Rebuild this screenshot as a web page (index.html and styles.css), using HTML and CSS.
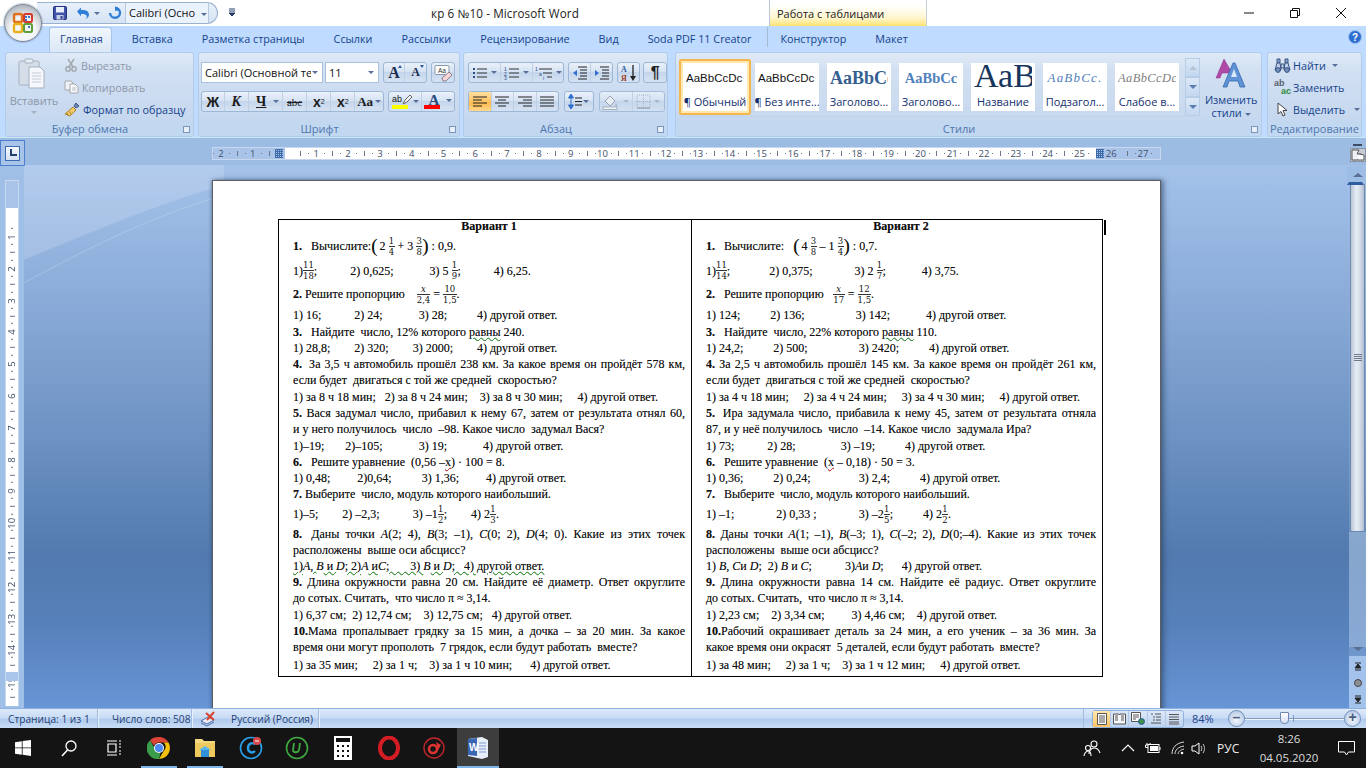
FILE: index.html
```html
<!DOCTYPE html>
<html lang="ru">
<head>
<meta charset="utf-8">
<title>кр 6 №10 - Microsoft Word</title>
<link rel="stylesheet" href="styles.css">
</head>
<body>
<div class="app">

<header class="titlebar">
  <div class="officebtn">
    <svg width="24" height="24" viewBox="0 0 24 24"><rect x="3" y="3" width="8" height="8" rx="1.5" fill="none" stroke="#e2711d" stroke-width="2.4"/><rect x="13" y="3" width="8" height="8" rx="1.5" fill="none" stroke="#d33a2c" stroke-width="2"/><rect x="3" y="13" width="8" height="8" rx="1.5" fill="none" stroke="#e8b21e" stroke-width="2.4"/><rect x="13" y="13" width="8" height="8" rx="1.5" fill="none" stroke="#5c9e3a" stroke-width="2"/><rect x="14" y="5" width="2" height="2" fill="#3a78c9"/><rect x="17" y="5" width="2" height="2" fill="#3a78c9"/><rect x="14" y="8" width="2" height="2" fill="#3a78c9"/><rect x="17" y="15" width="2" height="2" fill="#3a78c9"/></svg>
  </div>
  <div class="qat">
    <svg class="q-save" width="14" height="14" viewBox="0 0 14 14"><rect x="0.5" y="0.5" width="13" height="13" rx="1" fill="#3f54a8" stroke="#24327c"/><rect x="3" y="1" width="8" height="5.5" fill="#e8eefa"/><rect x="3.5" y="9" width="7" height="4.5" fill="#c6cfe8"/><rect x="7.5" y="10" width="2" height="3" fill="#36478f"/></svg>
    <svg class="q-undo" width="14" height="14" viewBox="0 0 14 14"><path d="M1 5.5 5 1.5V4c5-.6 8 1.6 8 4.5 0 2-1.400 3.800-3.500 4.500 1.300-1.200 1.600-2.500 1.100-3.500-.8-1.300-3-1.800-5.600-1.500v2.300z" fill="#2f7fd8"/></svg>
    <i class="caret q-caret"></i>
    <svg class="q-redo" width="14" height="14" viewBox="0 0 14 14"><path d="M7 1.800a5 5 0 1 1-5 5.200" fill="none" stroke="#2f7fd8" stroke-width="2.400"/><path d="M5 0v5.500h-3.500z" fill="#2f7fd8" transform="translate(6.500 -0.300) rotate(90 3 3)"/></svg>
    <div class="q-font">Calibri (Осно<i class="caret"></i></div>
  </div>
  <svg class="q-more" width="8" height="9" viewBox="0 0 8 9"><path d="M1 1h6M1 3h6M1 5h6L4 8z" fill="#25406e" stroke="#25406e"/></svg>
  <div class="doctitle">кр 6 №10 - Microsoft Word</div>
  <div class="ctxhead">Работа с таблицами</div>
  <div class="winbtns">
    <svg width="12" height="12" viewBox="0 0 12 12"><path d="M1 6h10" stroke="#111"/></svg>
    <svg width="12" height="12" viewBox="0 0 12 12"><path d="M1.500 3.500h7v7h-7zM3.500 3.500v-2h7v7h-2" fill="none" stroke="#111"/></svg>
    <svg width="12" height="12" viewBox="0 0 12 12"><path d="M1 1l10 10M11 1 1 11" stroke="#111"/></svg>
  </div>
</header>

<nav class="tabs">
  <span class="tab active">Главная</span><span class="tab">Вставка</span><span class="tab">Разметка страницы</span><span class="tab">Ссылки</span><span class="tab">Рассылки</span><span class="tab">Рецензирование</span><span class="tab">Вид</span><span class="tab">Soda PDF 11 Creator</span><span class="tab tab-ctx">Конструктор</span><span class="tab">Макет</span>
  <svg class="help" width="14" height="14" viewBox="0 0 14 14"><circle cx="7" cy="7" r="6.500" fill="#2f6fd0" stroke="#9cc0ee"/><text x="7" y="11" font-size="10" font-weight="700" text-anchor="middle" fill="#fff" font-family="Liberation Sans">?</text></svg>
</nav>

<section class="ribbon">
  <div class="group g-clip">
    <div class="g-body clip-body">
      <div class="paste">
        <svg width="28" height="32" viewBox="0 0 28 32"><rect x="1" y="3" width="20" height="24" rx="1.500" fill="#d4dde8" stroke="#a5b1c0"/><rect x="7" y="1" width="8" height="4" rx="1" fill="#e8edf3" stroke="#a5b1c0"/><path d="M11 9h11l4 4v17H11z" fill="#f5f7fa" stroke="#a5b1c0"/><path d="M14 15h9M14 18h9M14 21h9M14 24h9" stroke="#c3ccd8"/></svg>
        <span class="paste-t">Вставить</span>
        <i class="caret dis"></i>
      </div>
      <div class="clip-col">
        <div class="clip-row dis-t"><svg width="14" height="14" viewBox="0 0 14 14"><path d="M4 1l5 8M10 1 5 9" stroke="#a4a9ae" stroke-width="1.500"/><circle cx="4" cy="11" r="2.200" fill="none" stroke="#a4a9ae" stroke-width="1.400"/><circle cx="10" cy="11" r="2.200" fill="none" stroke="#a4a9ae" stroke-width="1.400"/></svg>Вырезать</div>
        <div class="clip-row dis-t"><svg width="15" height="14" viewBox="0 0 15 14"><path d="M1 1h6l2 2v7H1z" fill="#eef1f5" stroke="#a4a9ae"/><path d="M6 4h5l3 3v6H6z" fill="#f7f8fa" stroke="#a4a9ae"/><path d="M8 8h4M8 10h4" stroke="#b8bec6"/></svg>Копировать</div>
        <div class="clip-row"><svg width="16" height="15" viewBox="0 0 16 15"><path d="M1 12 9 5l3 3-6 6z" fill="#f0c869" stroke="#a8842f"/><path d="M3 11l1 2M5.500 9.500l1.500 2.500" stroke="#a8842f"/><path d="M10 4l2-3 3 3-3 2z" fill="#6b87b8" stroke="#3f5a8a"/></svg>Формат по образцу</div>
      </div>
    </div>
    <div class="g-label">Буфер обмена<i class="launcher"></i></div>
  </div>

  <div class="group g-font">
    <div class="g-body rows">
      <div class="row">
        <div class="combo c-name"><span class="clipt">Calibri (Основной те</span><i class="caret"></i></div>
        <div class="combo c-size"><span>11</span><i class="caret"></i></div>
        <div class="bar b-grow"><b class="btn f-grow">A<i class="up"></i></b><b class="btn f-shrink">A<i class="dn"></i></b></div>
        <div class="bar b-clear"><svg width="20" height="18" viewBox="0 0 20 18"><rect x="2" y="1.500" width="14" height="9" rx="1" fill="#fff" stroke="#8797ad"/><text x="9" y="8.500" font-size="6.500" text-anchor="middle" fill="#333" font-family="Liberation Sans">Aa</text><path d="M9 14l7-6 3 3-6 6h-3z" fill="#f6d4d8" stroke="#8a7f88"/></svg></div>
      </div>
      <div class="row">
        <div class="bar b-fmt">
          <b class="btn fw">Ж</b><b class="btn fi">К</b><b class="btn fu">Ч<i class="caret"></i></b><b class="btn fs">abc</b><b class="btn fx">x<sub>2</sub></b><b class="btn fx">x<sup>2</sup></b><b class="btn fa">Aa<i class="caret"></i></b>
        </div>
        <div class="bar b-color">
          <b class="btn hl"><span class="hl-t">ab</span><svg width="11" height="11" viewBox="0 0 11 11"><path d="M1 10l2-4 5-5 2 2-5 5z" fill="#eef0f3" stroke="#666"/></svg><i class="swatch yellow"></i><i class="caret"></i></b>
          <b class="btn fc">A<i class="swatch red"></i><i class="caret"></i></b>
        </div>
      </div>
    </div>
    <div class="g-label">Шрифт<i class="launcher"></i></div>
  </div>

  <div class="group g-para">
    <div class="g-body rows">
      <div class="row">
        <div class="bar b-lists">
          <b class="btn lst"><svg width="16" height="14" viewBox="0 0 16 14"><path d="M1 2h2v2H1zM1 6h2v2H1zM1 10h2v2H1z" fill="#2a4f8a"/><path d="M5 3h10M5 7h10M5 11h10" stroke="#333"/></svg><i class="caret"></i></b>
          <b class="btn lst"><svg width="16" height="14" viewBox="0 0 16 14"><text x="0" y="5" font-size="5" fill="#2a4f8a" font-family="Liberation Sans">1</text><text x="0" y="9.500" font-size="5" fill="#2a4f8a" font-family="Liberation Sans">2</text><text x="0" y="14" font-size="5" fill="#2a4f8a" font-family="Liberation Sans">3</text><path d="M5 3h10M5 7h10M5 11h10" stroke="#333"/></svg><i class="caret"></i></b>
          <b class="btn lst"><svg width="18" height="14" viewBox="0 0 18 14"><text x="0" y="5" font-size="5" fill="#2a4f8a" font-family="Liberation Sans">1</text><text x="4" y="9.500" font-size="5" fill="#2a4f8a" font-family="Liberation Sans">a</text><text x="8" y="14" font-size="5" fill="#2a4f8a" font-family="Liberation Sans">i</text><path d="M4 3h13M8 7h9M12 11h5" stroke="#333"/></svg><i class="caret"></i></b>
        </div>
        <div class="bar b-ind">
          <b class="btn ind"><svg width="15" height="14" viewBox="0 0 15 14"><path d="M6 1h9M8 4h7M8 7h7M8 10h7M6 13h9" stroke="#222"/><path d="M1 7l4-3v6z" fill="#2f6fd0"/></svg></b>
          <b class="btn ind"><svg width="15" height="14" viewBox="0 0 15 14"><path d="M6 1h9M8 4h7M8 7h7M8 10h7M6 13h9" stroke="#222"/><path d="M5 7 1 4v6z" fill="#2f6fd0"/></svg></b>
        </div>
        <div class="bar b-sort"><svg width="16" height="18" viewBox="0 0 16 18"><text x="0" y="8" font-size="8" font-weight="700" fill="#2f5d9f" font-family="Liberation Serif">А</text><text x="0" y="17" font-size="8" font-weight="700" fill="#9c3d2b" font-family="Liberation Serif">Я</text><path d="M12 1v14" stroke="#222" stroke-width="1.300"/><path d="M9 12h6l-3 5z" fill="#222"/></svg></div>
        <div class="bar b-pil"><span class="pil">¶</span></div>
      </div>
      <div class="row">
        <div class="bar b-align">
          <b class="btn al on"><svg width="16" height="14" viewBox="0 0 16 14"><path d="M1 2h14M1 5h9M1 8h14M1 11h9" stroke="#222"/></svg></b>
          <b class="btn al"><svg width="16" height="14" viewBox="0 0 16 14"><path d="M1 2h14M4 5h8M1 8h14M4 11h8" stroke="#222"/></svg></b>
          <b class="btn al"><svg width="16" height="14" viewBox="0 0 16 14"><path d="M1 2h14M6 5h9M1 8h14M6 11h9" stroke="#222"/></svg></b>
          <b class="btn al"><svg width="16" height="14" viewBox="0 0 16 14"><path d="M1 2h14M1 5h14M1 8h14M1 11h14" stroke="#222"/></svg></b>
        </div>
        <div class="bar b-space"><svg width="14" height="17" viewBox="0 0 14 17"><path d="M3 1 .5 5h5zM3 16 .5 12h5zM3 4v9" fill="#2f6fd0" stroke="#2f6fd0"/><path d="M7 5h7M7 8.500h7M7 12h7" stroke="#222"/></svg><i class="caret"></i></div>
        <div class="bar b-shade">
          <b class="btn sh"><svg width="18" height="16" viewBox="0 0 18 16"><path d="M3 7 8 2l5 5-5 5z" fill="#eef1f5" stroke="#8f98a4"/><path d="M14 9c1 2 2 3 0 4-1-1-1-2 0-4z" fill="#9fb0c4"/><rect x="1" y="13" width="14" height="2.500" fill="#fff" stroke="#9aa5b3"/></svg><i class="caret dis"></i></b>
          <b class="btn sh"><svg width="15" height="15" viewBox="0 0 15 15"><path d="M1 1h13v13H1zM7.500 1v13M1 7.500h13" fill="none" stroke="#a3aebc" stroke-dasharray="1 1"/><path d="M1 14h13" stroke="#7d8a9c"/></svg><i class="caret dis"></i></b>
        </div>
      </div>
    </div>
    <div class="g-label">Абзац<i class="launcher"></i></div>
  </div>

  <div class="group g-styles">
    <div class="g-body styles-body">
      <div class="gallery">
        <div class="st sel"><span class="st-s s1">AaBbCcDc</span><span class="st-l">¶ Обычный</span></div>
        <div class="st"><span class="st-s s1">AaBbCcDc</span><span class="st-l">¶ Без инте...</span></div>
        <div class="st"><span class="st-s s3">AaBbCc</span><span class="st-l">Заголово...</span></div>
        <div class="st"><span class="st-s s4">AaBbCc</span><span class="st-l">Заголово...</span></div>
        <div class="st"><span class="st-s s5">АаВ</span><span class="st-l">Название</span></div>
        <div class="st"><span class="st-s s6">AaBbCc.</span><span class="st-l">Подзагол...</span></div>
        <div class="st"><span class="st-s s7">AaBbCcDc</span><span class="st-l">Слабое в...</span></div>
        <div class="gal-scroll"><i class="gs dis-up"></i><i class="gs g-dn"></i><i class="gs g-more"></i></div>
      </div>
      <div class="chg">
        <svg width="32" height="30" viewBox="0 0 32 30"><path d="M9 1 1 20h4l2-5h7l2 5h4z" fill="#b04aa8" stroke="#8f2f8a" stroke-width=".5"/><path d="M18 5 8 29h4l2-6h9l2 6h5L20 5z" fill="#5f93d6" stroke="#3668b0" stroke-width=".8"/><path d="M16 19h6l-3-8z" fill="#dce9f8"/></svg>
        <span>Изменить<br>стили<i class="caret"></i></span>
      </div>
    </div>
    <div class="g-label">Стили<i class="launcher"></i></div>
  </div>

  <div class="group g-edit">
    <div class="g-body edit-col">
      <div class="ed"><svg width="17" height="15" viewBox="0 0 17 15"><path d="M3 1h3v4H3zM11 1h3v4h-3z" fill="#8aa6cf" stroke="#39527f"/><path d="M1 12l2-7h3l1 7zM10 12l1-7h3l2 7zM7 6h3v4H7z" fill="#c3d3ea" stroke="#39527f"/><circle cx="4" cy="12" r="2.400" fill="#6f8fbd" stroke="#39527f"/><circle cx="13" cy="12" r="2.400" fill="#6f8fbd" stroke="#39527f"/></svg>Найти<i class="caret"></i></div>
      <div class="ed"><span class="ab">ab<em>ac</em></span>Заменить</div>
      <div class="ed ed-sel"><svg width="11" height="15" viewBox="0 0 11 15"><path d="M1 1v11l3-2.500 2 4.500 2-1-2-4.500h4z" fill="#fff" stroke="#444"/></svg>Выделить<i class="caret"></i></div>
    </div>
    <div class="g-label lab-full">Редактирование</div>
  </div>
</section>

<div class="rulerrow">
  <div class="tabsel"><span class="tabsel-in"><svg width="8" height="8" viewBox="0 0 8 8"><path d="M1 0h2v5h5v2H1z" fill="#24406e"/></svg></span></div>
  <div class="hruler">
    <span class="rn first">2</span><span class="rn">1</span><span class="rn zero"><i class="gridmark"></i></span><span class="rn">1</span><span class="rn">2</span><span class="rn">3</span><span class="rn">4</span><span class="rn">5</span><span class="rn">6</span><span class="rn">7</span><span class="rn">8</span><span class="rn">9</span><span class="rn">10</span><span class="rn">11</span><span class="rn">12</span><span class="rn">13</span><span class="rn">14</span><span class="rn">15</span><span class="rn">16</span><span class="rn">17</span><span class="rn">18</span><span class="rn">19</span><span class="rn">20</span><span class="rn">21</span><span class="rn">22</span><span class="rn">23</span><span class="rn">24</span><span class="rn">25</span><span class="rn rn-mark"><i class="gridmark"></i>26</span><span class="rn">27</span>
  </div>
  <div class="rulertoggle"><i class="split"></i><span class="togglebtn"><svg width="14" height="12" viewBox="0 0 14 12"><path d="M1 1h7l-2 4h4v4l-4 2H1z" fill="#eef1f5" stroke="#555"/><path d="M8 5l5 1v5H7" fill="#fff" stroke="#555"/></svg></span></div>
</div>

<main class="work">
  <div class="vcol">
    <div class="vruler">
      <div class="v-top"></div>
      <span class="vn">1</span><span class="vn">2</span><span class="vn">3</span><span class="vn">4</span><span class="vn">5</span><span class="vn">6</span><span class="vn">7</span><span class="vn">8</span><span class="vn">9</span><span class="vn">10</span><span class="vn">11</span><span class="vn">12</span><span class="vn">13</span><span class="vn">14</span><span class="vn">15</span>
      <i class="v-mark"></i>
    </div>
  </div>
  <div class="canvas">
    <svg class="swoosh" width="200" height="130" viewBox="0 0 200 130"><path d="M0 0H200V20C130 40 60 70 0 95z" fill="#fff" opacity=".16"/><path d="M0 118C60 85 130 50 200 30" fill="none" stroke="#fff" opacity=".2"/></svg>
    <div class="page">
      <div class="doc">
        <div class="cell cell-l">
          <div class="ln head">Вариант 1</div>
          <div class="ln m h23"><b class="n1">1.</b><span>   Вычислите:</span><span class="par">(</span><span class="pad">2</span><span class="fr gap"><u>1</u><u>4</u></span><span> + 3</span><span class="fr gap"><u>3</u><u>8</u></span><span class="par">)</span><span> : 0,9.</span></div>
          <div class="ln m h25"><span>1)</span><span class="fr"><u>11</u><u>18</u></span><span>;           2) 0,625;            3) 5</span><span class="fr sp"><u>1</u><u>9</u></span><span>;           4) 6,25.</span></div>
          <div class="ln m h23"><b class="n1">2.</b><span> Решите пропорцию    </span><span class="fr it wide"><u>x</u><u>2,4</u></span><span> = </span><span class="fr wide"><u>10</u><u>1,5</u></span><span>.</span></div>
          <div class="ln h17">1) 16;           2) 24;            3) 28;          4) другой ответ.</div>
          <div class="ln"><b>3.</b>   Найдите  число, 12% которого <span class="wv-g">равны</span> 240.</div>
          <div class="ln">1) 28,8;        2) 320;        3) 2000;        4) другой ответ.</div>
          <div class="ln j"><b class="nb">4.</b> За 3,5 ч автомобиль прошёл 238 км. За какое время он пройдёт 578 км,</div>
          <div class="ln">если будет  двигаться с той же средней  скоростью?</div>
          <div class="ln">1) за 8 ч 18 мин;   2) за 8 ч 24 мин;    3) за 8 ч 30 мин;     4) другой ответ.</div>
          <div class="ln j"><b>5.</b> Вася задумал число, прибавил к нему 67, затем от результата отнял 60,</div>
          <div class="ln">и у него получилось  число  –98. Какое число  задумал Вася?</div>
          <div class="ln">1)–19;       2)–105;            3) 19;            4) другой ответ.</div>
          <div class="ln"><b>6.</b>   Решите уравнение  (0,56 –<span class="wv-r">x</span>) · 100 = 8.</div>
          <div class="ln">1) 0,48;         2)0,64;          3) 1,36;         4) другой ответ.</div>
          <div class="ln"><b>7.</b> Выберите  число, модуль которого наибольший.</div>
          <div class="ln m h23"><span>1)–5;        2) –2,3;           3) –1</span><span class="fr"><u>1</u><u>2</u></span><span>;        4) 2</span><span class="fr"><u>1</u><u>3</u></span><span>.</span></div>
          <div class="ln j"><b class="nb">8.</b>  Даны точки <span class="wv-g"><i>A</i></span>(2; 4), <i>B</i>(3; –1), <i>C</i>(0; 2), <i>D</i>(4; 0). Какие из этих точек</div>
          <div class="ln h15">расположены  выше оси абсцисс?</div>
          <div class="ln"><span class="wv-g">1)<i>A</i>, <i>B</i> и <i>D</i>; 2)<i>A</i> и<span class="wv-r"><i>C</i></span>;       3) <i>B</i> и <i>D</i>;   4) другой ответ.</span></div>
          <div class="ln j"><b>9.</b> Длина окружности равна 20 см. Найдите её диаметр. Ответ округлите</div>
          <div class="ln">до сотых. Считать,  что число π ≈ 3,14.</div>
          <div class="ln">1) 6,37 см;  2) 12,74 см;    3) 12,75 см;   4) другой ответ.</div>
          <div class="ln j"><b>10.</b>Мама пропалывает грядку за 15 мин, а дочка – за 20 мин. За какое</div>
          <div class="ln">время они могут прополоть  7 грядок, если будут работать  вместе?</div>
          <div class="ln h18">1) за 35 мин;     2) за 1 ч;    3) за 1 ч 10 мин;      4) другой ответ.</div>
        </div>
        <div class="cell cell-r">
          <div class="ln head">Вариант 2</div>
          <div class="ln m h23"><b class="n1">1.</b><span>   Вычислите:   </span><span class="par">(</span><span class="pad">4</span><span class="fr gap"><u>3</u><u>8</u></span><span> – 1</span><span class="fr gap"><u>3</u><u>4</u></span><span class="par">)</span><span> : 0,7.</span></div>
          <div class="ln m h25"><span>1)</span><span class="fr"><u>11</u><u>14</u></span><span>;             2) 0,375;              3) 2</span><span class="fr sp"><u>1</u><u>7</u></span><span>;            4) 3,75.</span></div>
          <div class="ln m h23"><b class="n1">2.</b><span>   Решите пропорцию   </span><span class="fr it wide"><u>x</u><u>17</u></span><span> = </span><span class="fr wide"><u>12</u><u>1,5</u></span><span>.</span></div>
          <div class="ln h17">1) 124;          2) 136;                 3) 142;            4) другой ответ.</div>
          <div class="ln"><b>3.</b>   Найдите  число, 22% которого <span class="wv-g">равны</span> 110.</div>
          <div class="ln">1) 24,2;          2) 500;                 3) 2420;          4) другой ответ.</div>
          <div class="ln j"><b>4.</b> За 2,5 ч автомобиль прошёл 145 км. За какое время он пройдёт 261 км,</div>
          <div class="ln">если будет  двигаться с той же средней  скоростью?</div>
          <div class="ln">1) за 4 ч 18 мин;     2) за 4 ч 24 мин;     3) за 4 ч 30 мин;     4) другой ответ.</div>
          <div class="ln j"><b class="nb">5.</b> Ира задумала число, прибавила к нему 45, затем от результата отняла</div>
          <div class="ln">87, и у неё получилось  число  –14. Какое число  задумала Ира?</div>
          <div class="ln">1) 73;           2) 28;               3) –19;          4) другой ответ.</div>
          <div class="ln"><b>6.</b>   Решите уравнение  (<span class="wv-r">x</span> – 0,18) · 50 = 3.</div>
          <div class="ln">1) 0,36;          2) 0,24;                3) 2,4;          4) другой ответ.</div>
          <div class="ln"><b>7.</b>   Выберите  число, модуль которого наибольший.</div>
          <div class="ln m h23"><span>1) –1;              2) 0,33 ;              3) –2</span><span class="fr"><u>1</u><u>5</u></span><span>;          4) 2</span><span class="fr"><u>1</u><u>2</u></span><span>.</span></div>
          <div class="ln j"><b>8.</b>  Даны точки <span class="wv-g"><i>A</i></span>(1; –1), <i>B</i>(–3; 1), <i>C</i>(–2; 2), <i>D</i>(0;–4). Какие из этих точек</div>
          <div class="ln h15">расположены  выше оси абсцисс?</div>
          <div class="ln">1) <i>B</i>, <i>C</i>и <i>D</i>;  2) <i>B</i> и <span class="wv-g"><i>C</i></span>;           3)<i>A</i>и <i>D</i>;      4) другой ответ.</div>
          <div class="ln j"><b>9.</b>  Длина окружности равна 14 см. Найдите её радиус. Ответ округлите</div>
          <div class="ln">до сотых. Считать,  что число π ≈ 3,14.</div>
          <div class="ln">1) 2,23 см;    2) 3,34 см;         3) 4,46 см;    4) другой ответ.</div>
          <div class="ln j"><b>10.</b>Рабочий окрашивает деталь за 24 мин, а его ученик – за 36 мин. За</div>
          <div class="ln">какое время они окрасят  5 деталей, если будут работать  вместе?</div>
          <div class="ln h18">1) за 48 мин;     2) за 1 ч;    3) за 1 ч 12 мин;     4) другой ответ.</div>
        </div>
        <i class="cursor"></i>
      </div>
    </div>
  </div>
  <aside class="vscroll">
    <i class="sb-arrow up"></i>
    <i class="sb-thumb"><i class="sb-grip"></i></i>
    <i class="sb-track"></i>
    <i class="sb-arrow down"></i>
    <div class="sb-nav">
      <svg width="8" height="9" viewBox="0 0 8 9"><path d="M1 8h6M1 6h6L4 2z M1 1h6" stroke="#222" fill="#222"/></svg>
      <svg width="8" height="8" viewBox="0 0 8 8"><circle cx="4" cy="4" r="3.500" fill="#8b8f96" stroke="#444"/></svg>
      <svg width="8" height="9" viewBox="0 0 8 9"><path d="M1 1h6M1 3h6L4 7zM1 8h6" stroke="#222" fill="#222"/></svg>
    </div>
  </aside>
</main>

<footer class="status">
  <span class="s-cell s1c">Страница: 1 из 1</span>
  <span class="s-cell s2c">Число слов: 508</span>
  <span class="s-cell s3c"><svg width="16" height="16" viewBox="0 0 16 16"><path d="M1 10l7-4 6 3-7 4z" fill="#e9eef7" stroke="#4a6aa5"/><path d="M1 12l6 3 7-4" fill="none" stroke="#4a6aa5"/><path d="M6 2l8 7M14 1 7 9" stroke="#d8432f" stroke-width="2"/></svg><span class="lang">Русский (Россия)</span></span>
  <div class="s-right">
    <div class="views">
      <b class="vw on"><svg width="12" height="12" viewBox="0 0 12 12"><path d="M1.500.5h9v11h-9zM3 3h6M3 5h6M3 7h6M3 9h6" fill="#fff" stroke="#555"/></svg></b>
      <b class="vw"><svg width="13" height="12" viewBox="0 0 13 12"><path d="M.5 1h5.500l.5 1 .5-1h5.500v10H.5zM2 3h3M2 5h3M2 7h3M8 3h3M8 5h3M8 7h3" fill="#f4f6f9" stroke="#555"/></svg></b>
      <b class="vw"><svg width="14" height="13" viewBox="0 0 14 13"><path d="M.5.5h9v9h-9zM2 3h6M2 5h6M2 7h3" fill="#fff" stroke="#555"/><circle cx="10.500" cy="9.500" r="3" fill="#3f8e4c" stroke="#2a5fa5"/></svg></b>
      <b class="vw"><svg width="12" height="12" viewBox="0 0 12 12"><path d="M1 1h2M5 1h6M3 4h2M6 4h5M3 7h2M6 7h5M1 10h10" stroke="#555"/></svg></b>
      <b class="vw"><svg width="12" height="12" viewBox="0 0 12 12"><path d="M1 1.500h10M1 4h10M1 6.500h10M1 9h10M1 11h10" stroke="#555"/></svg></b>
    </div>
    <span class="zoomval">84%</span>
    <b class="zbtn">–</b>
    <span class="ztrack"><i class="zthumb"></i><i class="zmid"></i></span>
    <b class="zbtn">+</b>
  </div>
</footer>

<div class="taskbar">
  <span class="tb win"><svg width="16" height="16" viewBox="0 0 16 16"><path d="M0 2.200 6.800 1.200v6.300H0zM7.600 1.100 16 0v7.500H7.600zM0 8.300h6.800v6.400L0 13.800zM7.600 8.300H16V16l-8.400-1.200z" fill="#fff"/></svg></span>
  <span class="tb nar"><svg width="16" height="17" viewBox="0 0 16 17"><circle cx="10" cy="6" r="5" fill="none" stroke="#fff" stroke-width="1.300"/><path d="M6.500 10 1 16" stroke="#fff" stroke-width="1.600"/></svg></span>
  <span class="tb nar"><svg width="16" height="16" viewBox="0 0 16 16"><path d="M1 1h10M1 15h10M2 4h8v8H2zM13 1h2M13 7h2M13 14h2M13 4h2M13 11h2" fill="none" stroke="#fff" stroke-width="1.200"/></svg></span>
  <span class="tb pin"><svg width="24" height="24" viewBox="0 0 24 24"><path d="M12 1a11 11 0 0 1 9.500 5.500H12a5.500 5.500 0 0 0-5 3L3 4.200A11 11 0 0 1 12 1z" fill="#db4437"/><path d="M21.500 6.500A11 11 0 0 1 12 23l4.700-8a5.500 5.500 0 0 0 0-8.500z" fill="#f4c20d"/><path d="M12 23A11 11 0 0 1 3 4.200L7.500 12a5.500 5.500 0 0 0 6 5z" fill="#3b9c4b"/><circle cx="12" cy="12" r="5" fill="#fff"/><circle cx="12" cy="12" r="4" fill="#4c8bf5"/></svg></span>
  <span class="tb pin"><svg width="22" height="20" viewBox="0 0 22 20"><path d="M1 1h7l2 2h11v16H1z" fill="#f5d97e"/><path d="M1 5h20v14H1z" fill="#eeca5e"/><path d="M7 12h8v7H7z" fill="#2f8fd8"/><path d="M5 12h12l-6-4z" fill="#58b6ee"/></svg></span>
  <span class="tb"><svg width="24" height="24" viewBox="0 0 24 24"><circle cx="12" cy="12" r="10.500" fill="none" stroke="#2aa0e8" stroke-width="1.600"/><path d="M16 8.500c-3-3-7-.5-7 3.500s4 6 7 3" fill="none" stroke="#2aa0e8" stroke-width="2.400"/><circle cx="18" cy="5" r="4" fill="#d94848"/><path d="M16 5h4" stroke="#fff"/></svg></span>
  <span class="tb"><svg width="24" height="24" viewBox="0 0 24 24"><circle cx="12" cy="12" r="10.500" fill="none" stroke="#3fa83f" stroke-width="1.600"/><path d="M9 7l-1 7c0 3 5 3 6 0l1-7" fill="none" stroke="#3fa83f" stroke-width="1.800"/></svg></span>
  <span class="tb"><svg width="18" height="24" viewBox="0 0 18 24"><rect width="18" height="24" fill="#fff"/><rect x="2" y="2" width="14" height="4" fill="#111"/><path d="M3 9h2v2H3zM8 9h2v2H8zM13 9h2v2h-2zM3 14h2v2H3zM8 14h2v2H8zM13 14h2v2h-2zM3 19h2v2H3zM8 19h2v2H8zM13 19h2v2h-2z" fill="#111"/></svg></span>
  <span class="tb nar2"><svg width="22" height="24" viewBox="0 0 22 24"><ellipse cx="11" cy="12" rx="9" ry="10.500" fill="none" stroke="#d41c25" stroke-width="4"/></svg></span>
  <span class="tb"><svg width="22" height="22" viewBox="0 0 22 22"><circle cx="11" cy="11" r="10" fill="none" stroke="#c3262a" stroke-width="1.400"/><circle cx="10" cy="12" r="4" fill="none" stroke="#d33" stroke-width="2.600"/><path d="M13 5l5 3-3 5z" fill="#d33"/></svg></span>
  <span class="tb active"><svg width="22" height="24" viewBox="0 0 22 24"><path d="M1 3 15 1l6 3v17l-6 2-14-3z" fill="#e8eef8"/><path d="M1 3 10 2v18l-9-1z" fill="#3b66b3"/><path d="M12 7h7M12 10h7M12 13h7M12 16h7" stroke="#7d9bd0"/><text x="2" y="15" font-size="10" font-weight="700" fill="#fff" font-family="Liberation Sans">W</text></svg></span>
  <div class="tray">
    <svg class="t-people" width="18" height="18" viewBox="0 0 18 18"><circle cx="11" cy="5" r="3" fill="none" stroke="#fff" stroke-width="1.100"/><path d="M6 15c0-3 2-6 5-6s5 2 6 5" fill="none" stroke="#fff" stroke-width="1.100"/><circle cx="5" cy="9" r="2.500" fill="#111" stroke="#fff" stroke-width="1.100"/><path d="M1 17c0-2 2-5 4-5s3 2 3 5" fill="none" stroke="#fff" stroke-width="1.100"/></svg>
    <svg class="t-chev" width="14" height="8" viewBox="0 0 14 8"><path d="M1 7l6-6 6 6" fill="none" stroke="#fff" stroke-width="1.100"/></svg>
    <svg class="t-bat" width="17" height="12" viewBox="0 0 17 12"><path d="M3 1v2M6 1v2M1.500 3h6v2.500h-6zM4.500 5.500V9" fill="none" stroke="#fff"/><rect x="4" y="2.500" width="11" height="8" fill="#111" stroke="#fff"/><rect x="6" y="4" width="8" height="5" fill="#fff"/><path d="M16 5v3" stroke="#fff"/></svg>
    <svg class="t-wifi" width="14" height="14" viewBox="0 0 14 14"><path d="M1 13C1 7 5 2 13 1M4 13c0-4 3-7 9-8M7 13c0-2 2-4 6-5" fill="none" stroke="#ddd" stroke-width="1"/><circle cx="11" cy="12" r="1.300" fill="#fff"/></svg>
    <svg class="t-vol" width="16" height="13" viewBox="0 0 16 13"><path d="M1 4h3l4-3v11L4 9H1z" fill="none" stroke="#fff"/><path d="M10 4c1 1.500 1 3.500 0 5M12 2c2 3 2 6 0 9" fill="none" stroke="#ccc"/></svg>
    <span class="t-lang">РУС</span>
    <span class="t-clock">8:26<br>04.05.2020</span>
    <svg class="t-note" width="17" height="15" viewBox="0 0 17 15"><path d="M.500.500h16v10.500H10.500L8.500 14 6.500 11H.500z" fill="none" stroke="#fff"/></svg>
  </div>
</div>

</div>
</body>
</html>
```

FILE: styles.css
```css
* { box-sizing: border-box; }
html, body { margin: 0; padding: 0; }
body { width: 1366px; height: 768px; overflow: hidden; font-family: "Open Sans", "Noto Sans", sans-serif; font-size: 11px; color: #15428b; }
.app { display: flex; flex-direction: column; width: 1366px; height: 768px; position: relative; overflow: hidden; }
i, u, b { display: inline-block; }
.caret { width: 0; height: 0; border: 3px solid transparent; border-top: 3px solid #56709c; border-bottom: 0; display: inline-block; vertical-align: middle; margin-left: 6px; }
.caret.dis { border-top-color: #a5b1c2; }

/* title bar */
.titlebar { height: 26px; background: #fff; display: flex; align-items: center; position: relative; flex: none; }
.officebtn { position: absolute; left: 4px; top: 4px; width: 38px; height: 38px; border-radius: 50%; background: radial-gradient(circle at 50% 70%, #f4f5f6 0 40%, #c2c7ce 70%, #8c939d 100%); border: 1px solid #7c8a9c; box-shadow: 0 0 2px #5b6c82; display: flex; align-items: center; justify-content: center; z-index: 3; }
.qat { margin-left: 37px; height: 22px; width: 181px; display: flex; align-items: center; border: 1px solid #9bb2cf; border-left: 0; border-radius: 0 11px 11px 0; background: linear-gradient(#e8f0fa, #d5e3f4); padding-left: 16px; }
.q-undo { margin-left: 9px; }
.q-caret { margin-left: 4px; margin-right: 0; }
.q-redo { margin-left: 8px; }
.q-font { margin-left: 3px; height: 20px; width: 84px; background: #eaf2fc; border-left: 1px solid #b7c9e0; border-right: 1px solid #b7c9e0; padding-left: 3px; color: #111; font-size: 11px; line-height: 19px; white-space: nowrap; }
.q-more { margin-left: 10px; margin-top: -2px; }
.doctitle { position: absolute; left: 431px; top: 5px; color: #222; font-size: 11.700px; letter-spacing: .1px; }
.ctxhead { position: absolute; left: 769px; top: 0; width: 158px; height: 26px; padding: 6px 0 0 7px; color: #222; font-size: 11px; background: linear-gradient(#fff 20%, #fff6cd 70%, #ffe26f 100%); border-left: 1px solid #b9c6d9; border-right: 1px solid #c9cfd6; }
.winbtns { margin-left: auto; display: flex; gap: 34px; padding-right: 19px; }

/* tabs */
.tabs { height: 24px; background: #bfdbff; display: flex; align-items: center; gap: 29px; padding-left: 60px; flex: none; position: relative; }
.tab { font-size: 10.800px; color: #15428b; white-space: nowrap; position: relative; }
.tab.active { isolation: isolate; }
.tab.active::before { content: ""; position: absolute; z-index: -1; left: -11px; right: -9px; top: -4px; bottom: -6px; background: linear-gradient(#f0f6fd, #dbe7f6); border: 1px solid #a6c4e8; border-bottom: 0; border-radius: 3px 3px 0 0; }
.tab-ctx::before { content: ""; position: absolute; left: -13px; top: -4px; height: 20px; width: 1px; background: #a5b9d2; }
.help { position: absolute; right: 4px; top: 4px; }

/* ribbon */
.ribbon { height: 88px; flex: none; background: #bfdbff; display: flex; padding: 2px 0 0 5px; border-bottom: 1px solid #c8e6f4; }
.group { height: 85px; border: 1px solid #b1cbe8; border-radius: 3px; background: linear-gradient(#dfeaf7, #d2e0f2 20%, #c6d8ef 80%); display: flex; flex-direction: column; overflow: hidden; position: relative; }
.g-body { flex: 1; min-height: 0; }
.g-label { height: 15px; background: #c2d8f1; text-align: center; color: #4e76ad; font-size: 11px; line-height: 15px; padding-right: 19px; position: relative; flex: none; white-space: nowrap; }
.lab-full { padding-right: 0; }
.launcher { position: absolute; right: 3px; bottom: 3px; width: 7px; height: 7px; border: 1px solid #7a96bd; background: #e9f0fa; }
.g-clip { width: 189px; margin-right: 4px; }
.g-font { width: 262px; margin-right: 3px; }
.g-para { width: 205px; margin-right: 7px; }
.g-styles { width: 587px; margin-right: 5px; }
.g-edit { width: 95px; }
.clip-body { display: flex; }
.paste { width: 56px; display: flex; flex-direction: column; align-items: center; padding: 5px 0 0 0; }
.paste svg { margin-left: -4px; }
.paste-t { color: #8b97a7; font-size: 11px; margin-top: 3px; }
.paste .caret { margin: 3px 0 0; }
.clip-col { padding-top: 1px; margin-left: 2px; }
.clip-row { height: 22px; display: flex; align-items: center; gap: 3px; font-size: 10.800px; white-space: nowrap; }
.clip-row svg { flex: none; }
.dis-t { color: #8d99a9; }
.rows { padding: 9px 0 0 2px; display: flex; flex-direction: column; gap: 8px; }
.row { display: flex; height: 21px; }
.combo { background: #fff; border: 1px solid #a9c0dc; height: 21px; color: #111; display: flex; align-items: center; padding-left: 3px; font-size: 11px; }
.combo .caret { margin-left: auto; margin-right: 4px; }
.clipt { width: 106px; overflow: hidden; white-space: nowrap; }
.c-name { width: 122px; }
.c-size { width: 54px; margin-left: 2px; }
.bar { height: 21px; border: 1px solid #9db7d6; border-radius: 3px; background: linear-gradient(#eaf1fa, #d6e3f3 45%, #c5d6ec 50%, #d5e2f2); display: flex; align-items: center; color: #222; }
.btn { height: 100%; display: flex; align-items: center; justify-content: center; border-right: 1px solid #bfd0e5; position: relative; font-weight: 400; }
.btn:last-child { border-right: 0; }
.b-grow { width: 44px; margin-left: 4px; }
.f-grow, .f-shrink { width: 22px; font-family: "Liberation Serif", serif; font-weight: 700; color: #1b2e50; font-size: 16px; }
.f-shrink { font-size: 12px; }
.up, .dn { width: 0; height: 0; border: 2.500px solid transparent; position: absolute; right: 2px; top: 2px; }
.up { border-bottom: 3px solid #2f5da0; border-top: 0; }
.dn { border-top: 3px solid #2f5da0; border-bottom: 0; }
.b-clear { width: 24px; margin-left: 4px; justify-content: center; }
.b-fmt { width: 183px; }
.fw, .fi, .fu, .fs, .fx, .fa { font-family: "Liberation Serif", serif; color: #1c1c1c; height: 100%; }
.fw { width: 23px; font-weight: 700; font-size: 14px; font-family: "Liberation Sans", sans-serif; }
.fi { width: 24px; font-weight: 700; font-style: italic; font-size: 14px; }
.fu { width: 34px; font-weight: 700; font-size: 14px; text-decoration: underline; padding-right: 8px; }
.fu .caret { position: absolute; right: 3px; }
.fs { width: 25px; font-size: 11px; text-decoration: line-through; }
.fx { width: 24px; font-weight: 700; font-size: 14px; font-family: "Liberation Sans", sans-serif; }
.fx sub, .fx sup { font-size: 7px; font-weight: 400; }
.fa { width: 28px; font-size: 13px; font-weight: 700; border-right: 0; justify-content: flex-start; padding-left: 2px; }
.fa .caret { margin-left: 2px; }
.b-color { width: 67px; margin-left: 4px; }
.hl { width: 34px; justify-content: flex-start; padding-left: 3px; }
.hl-t { font-size: 9px; line-height: 9px; color: #111; margin-bottom: 5px; font-family: "Liberation Sans", sans-serif; }
.hl svg { margin-bottom: 4px; }
.hl .caret { position: absolute; right: 2px; margin: 0; }
.swatch { position: absolute; height: 4px; width: 16px; left: 3px; bottom: 2px; }
.yellow { background: #ffff00; }
.red { background: #f00; }
.fc { width: 32px; font-family: "Liberation Serif", serif; font-size: 15px; color: #28487f; font-weight: 700; justify-content: flex-start; padding: 0 0 3px 6px; }
.fc .swatch { left: 2px; }
.fc .caret { position: absolute; right: 2px; margin: 0; }
.b-lists { width: 98px; margin-left: 2px; }
.lst { flex: 1; gap: 0; }
.lst .caret { margin-left: 3px; }
.b-ind { width: 45px; margin-left: 4px; }
.ind { flex: 1; }
.b-sort { width: 24px; margin-left: 4px; justify-content: center; }
.b-pil { width: 24px; margin-left: 3px; justify-content: center; }
.pil { font-family: "Liberation Sans", sans-serif; font-weight: 700; font-size: 16px; color: #222; }
.b-align { width: 91px; margin-left: 2px; }
.al { flex: 1; }
.al.on { background: linear-gradient(#ffe0a0, #ffc463 50%, #ffb74d 55%, #ffd98a); }
.b-space { width: 30px; margin-left: 5px; padding-left: 3px; }
.b-space .caret { margin-left: 1px; }
.b-shade { width: 66px; margin-left: 5px; opacity: .85; }
.sh { flex: 1; }
.sh .caret { margin-left: 3px; }
.styles-body { display: flex; padding: 5px 0 0 3px; }
.gallery { width: 522px; height: 59px; border: 1px solid #c2d4ea; border-top: 0; border-left: 0; border-radius: 3px; display: flex; gap: 8px; padding: 5px 0 0 3px; position: relative; }
.st { width: 64px; height: 48px; background: #fff; display: flex; flex-direction: column; align-items: center; overflow: hidden; }
.st.sel { width: 72px; height: 56px; margin: -4px -4px 0 -3px; border: 2px solid #f4b650; border-radius: 2px; padding: 2px 4px; background: #fff; box-shadow: inset 0 0 0 2px #ffe7ae; }
.st-s { height: 30px; line-height: 30px; width: 58px; overflow: hidden; white-space: nowrap; color: #111; font-family: "Liberation Sans", sans-serif; text-align: center; flex: none; }
.s1 { font-size: 11.500px; text-align: left; }
.s3 { font-family: "Liberation Serif", serif; font-weight: 700; font-size: 18px; color: #365f91; text-align: left; }
.s4 { font-family: "Liberation Serif", serif; font-weight: 700; font-size: 14.500px; color: #4f81bd; }
.s5 { font-family: "Liberation Serif", serif; font-size: 34px; color: #17365d; line-height: 26px; }
.s6 { font-family: "Liberation Serif", serif; font-style: italic; font-size: 13px; letter-spacing: 1.200px; color: #4f81bd; }
.s7 { font-family: "Liberation Serif", serif; font-style: italic; font-size: 12.500px; color: #808080; letter-spacing: .4px; }
.st-l { color: #15306e; font-size: 11px; line-height: 17px; white-space: nowrap; }
.gal-scroll { position: absolute; left: 506px; top: 0; width: 15px; height: 58px; display: flex; flex-direction: column; }
.gs { flex: 1; border: 1px solid #b7cce6; background: linear-gradient(#dce8f7, #c3d7ef); position: relative; }
.gs::after { content: ""; position: absolute; left: 3px; top: 7px; border: 4px solid transparent; border-top: 4px solid #5b7eb0; border-bottom: 0; }
.dis-up::after { border-top: 0; border-bottom: 4px solid #b5c3d6; }
.chg { margin-left: 3px; width: 60px; text-align: center; display: flex; flex-direction: column; align-items: center; line-height: 13px; font-size: 10.800px; }
.chg svg { margin-bottom: 5px; }
.chg .caret { margin-left: 3px; }
.edit-col { padding-top: 1px; padding-left: 6px; }
.ed { height: 22px; display: flex; align-items: center; gap: 2px; white-space: nowrap; font-size: 10.800px; }
.ed .caret { margin-left: 4px; }
.ed-sel { padding-left: 3px; gap: 5px; }
.ab { width: 17px; font-size: 9px; line-height: 8px; color: #59616d; font-family: "Liberation Sans", sans-serif; font-weight: 700; }
.ab em { display: block; color: #2d8a3b; font-style: normal; text-align: right; }

/* ruler row */
.rulerrow { height: 27px; background: #9dbce3; display: flex; flex: none; position: relative; }
.tabsel { width: 25px; height: 26px; margin: 2px 0 0 0; border: 1px solid #4d7ed0; display: flex; align-items: center; justify-content: center; background: #a8c4e8; }
.tabsel-in { width: 15px; height: 15px; background: linear-gradient(#f6f9fd, #d4e1f2); border: 1px solid #3e6cb0; display: flex; align-items: center; justify-content: center; }
.hruler { position: absolute; left: 212px; top: 9px; width: 949px; height: 13px; overflow: hidden; display: flex; border: 1px solid #c8d9ef; background: linear-gradient(90deg, #a9c4e8 72px, #fff 72px, #fff 883px, #a9c4e8 883px); }
.rn { flex: none; position: relative; width: 31.800px; height: 11px; font-size: 9.500px; line-height: 11px; color: #42506a; text-align: center; background: linear-gradient(#6b7686, #6b7686) 0 3px / 1px 5px no-repeat, linear-gradient(#6b7686, #6b7686) 8px 5px / 1px 1px no-repeat, linear-gradient(#6b7686, #6b7686) 24px 5px / 1px 1px no-repeat; }
.rn.first { margin-left: -8px; }
.zero { text-align: left; background: linear-gradient(#6b7686, #6b7686) 0 3px / 1px 5px no-repeat, linear-gradient(#6b7686, #6b7686) 8px 5px / 1px 1px no-repeat; }
.gridmark { width: 8px; height: 9px; margin: 1px 0 0 6px; background: repeating-linear-gradient(90deg, #3d6aa8 0 1px, transparent 1px 2px), repeating-linear-gradient(#3d6aa8 0 1px, transparent 1px 2px); display: block; }
.rn-mark { background: none; }
.rn-mark .gridmark { position: absolute; left: 1px; top: 0; margin: 1px 0 0; }
.rulertoggle { position: absolute; right: 0; top: 0; width: 17px; height: 27px; display: flex; flex-direction: column; align-items: center; }
.split { width: 9px; height: 2px; background: #3c4a62; margin-top: 6px; }
.togglebtn { width: 16px; height: 14px; margin-top: 2px; background: #c7ccd4; border: 1px solid #8893a3; display: flex; align-items: center; justify-content: center; }

/* workspace */
.work { height: 543px; display: flex; flex: none; background: linear-gradient(#a4c2ea 0, #8aabd8 25%, #6d92c3 50%, #527aaf 72%, #5781bb 85%, #6795d5 100%); overflow: hidden; }
.vcol { width: 24px; flex: none; background: #a0bfe6; padding: 15px 0 0 5px; }
.vruler { width: 14px; height: 526px; background: #fff; border: 1px solid #c8d9ef; border-bottom: 0; position: relative; display: flex; flex-direction: column; align-items: center; overflow: hidden; }
.v-top { flex: none; height: 40px; width: 100%; background: linear-gradient(#a9c4e8 27px, #fff 27px); }
.vn { flex: none; height: 31.800px; width: 100%; font-size: 9.500px; line-height: 12px; color: #42506a; writing-mode: vertical-rl; transform: rotate(180deg); text-align: center; background: linear-gradient(#6b7686, #6b7686) 3px 0 / 5px 1px no-repeat, linear-gradient(#6b7686, #6b7686) 5px 8px / 2px 1px no-repeat, linear-gradient(#6b7686, #6b7686) 5px 24px / 2px 1px no-repeat; }
.v-mark { position: absolute; left: 0; right: 0; top: 491px; height: 9px; background: #aac6ea; }
.canvas { flex: 1; position: relative; padding: 15px 0 0 188px; min-width: 0; }
.swoosh { position: absolute; left: 0; top: 0; }
.page { position: relative; width: 949px; height: 560px; background: #fff; border: 1px solid #5d5d5d; padding: 38px 0 0 65px; box-shadow: 3px 0 5px rgba(40, 60, 90, .55), -1px 0 3px rgba(40, 60, 90, .35); }
.doc { display: flex; width: 825px; position: relative; font-family: "Liberation Serif", "Times New Roman", serif; font-size: 12px; color: #111; text-shadow: 0 0 .6px rgba(0, 0, 0, .45); }
.cell { width: 413px; height: 458px; border: 1.500px solid #000; }
.cell-l { padding: 0 6px 0 14px; border-right: 0; }
.cell-r { padding: 0 6px 0 14px; width: 412px; }
.ln { height: 16.300px; line-height: 16.300px; white-space: pre; }
.ln.m { display: flex; align-items: center; }
.head { text-align: center; font-weight: 700; height: 15px; line-height: 13px; }
.h23 { height: 23.500px; line-height: 23.500px; }
.h25 { height: 24.500px; line-height: 24.500px; }
.h17 { height: 17px; line-height: 17px; }
.h15 { height: 15.300px; line-height: 15.300px; }
.h18 { height: 18px; line-height: 18px; }
.j { white-space: normal; text-align: justify; text-align-last: justify; }
.nb { margin-right: 3px; }
.par { font-size: 19px; line-height: 16px; font-weight: 400; margin-top: -2px; }
.pad { margin-left: 2px; }
.fr { display: inline-flex; flex-direction: column; text-align: center; font-size: 8.500px; line-height: 10.500px; min-width: 6px; margin: 0; font-family: "DejaVu Serif", "Liberation Serif", serif; text-shadow: none; }
.fr.gap { margin-left: 3px; }
.fr.sp { margin-left: 3px; }
.fr.wide { min-width: 12px; }
.fr u { text-decoration: none; display: block; }
.fr u:first-child { border-bottom: 1px solid #333; }
.fr.it u:first-child { font-style: italic; }
.wv-g { text-decoration: underline wavy #2a9a2a 1px; text-underline-offset: 1px; }
.wv-r { text-decoration: underline wavy #d8242a 1px; text-underline-offset: 1px; }
.cursor { position: absolute; left: 826px; top: 1px; width: 2px; height: 15px; background: #000; }

/* scrollbar */
.vscroll { width: 17px; flex: none; display: flex; flex-direction: column; align-items: center; background: rgba(160, 190, 225, .3); position: relative; }
.sb-arrow { width: 100%; height: 18px; flex: none; position: relative; background: #9dbde6; }
.sb-arrow::after { content: ""; position: absolute; left: 4px; top: 6px; border: 5px solid transparent; border-top: 0; border-bottom: 4px solid #5a6f92; }
.sb-arrow.down { height: 9px; background: transparent; }
.sb-arrow.down::after { top: 0; border-bottom: 0; border-top: 4px solid #5a6f92; }
.sb-thumb { width: 15px; height: 349px; flex: none; border: 1px solid #6e89ae; border-radius: 2px; background: linear-gradient(90deg, #b9c5d6, #e6ecf4 40%, #dde4ee 60%, #b2bfd1); display: flex; align-items: center; justify-content: center; }
.sb-grip { width: 8px; height: 7px; background: repeating-linear-gradient(#707a8a 0 1px, transparent 1px 2px); }
.sb-track { flex: none; height: 115px; width: 100%; background: rgba(190, 210, 235, .35); }
.sb-nav { flex: 1; width: 100%; background: #a3c2ec; display: flex; flex-direction: column; align-items: center; justify-content: space-around; padding: 2px 0 0; }

/* status bar */
.status { height: 20px; flex: none; background: linear-gradient(#dce9f9, #c9dcf5 45%, #b1cbee 55%, #c9ddf6); border-top: 1px solid #8fb0dc; display: flex; align-items: center; font-size: 10.200px; color: #233e72; position: relative; }
.s-cell { height: 19px; display: flex; align-items: center; border-right: 1px solid #a3bde0; white-space: nowrap; box-shadow: 1px 0 0 #e6f0fb; }
.s1c { width: 98px; padding-left: 8px; }
.s2c { width: 94px; padding-left: 14px; }
.s3c { width: 127px; padding-left: 8px; }
.lang { margin-left: 15px; }
.s-right { margin-left: auto; width: 283px; height: 19px; display: flex; align-items: center; padding-left: 8px; border-left: 1px solid #a3bde0; }
.views { width: 92px; height: 18px; display: flex; border: 1px solid #8fb0dc; border-radius: 3px; background: linear-gradient(#dce8f8, #bcd2ef); }
.vw { flex: 1; display: flex; align-items: center; justify-content: center; border-right: 1px solid #b3c9e6; }
.vw:last-child { border-right: 0; }
.vw.on { background: linear-gradient(#ffe6ac, #ffc565); }
.zoomval { margin-left: 8px; width: 31px; color: #1e3f8c; font-size: 11px; }
.zbtn { width: 17px; height: 17px; border-radius: 50%; margin-left: 5px; flex: none; border: 1px solid #6f8fbd; background: radial-gradient(circle at 50% 60%, #f2f6fc, #a9c0e0); color: #4b5c7a; font-size: 14px; line-height: 13px; text-align: center; font-family: "Liberation Sans", sans-serif; font-weight: 700; margin-right: 0; }
.zbtn:last-child { margin-left: 0; margin-right: 5px; }
.ztrack { flex: 1; height: 1px; background: #7f9bc2; position: relative; box-shadow: 0 1px 0 #eef4fc; }
.zthumb { position: absolute; left: 35px; top: -6px; width: 9px; height: 12px; background: linear-gradient(#fff, #d3def0); border: 1px solid #6e88ad; border-radius: 1px 1px 4px 4px; }
.zmid { position: absolute; left: 48px; top: -3px; width: 1px; height: 7px; background: #7f9bc2; }

/* taskbar */
.taskbar { flex: 1; background: #141414; display: flex; align-items: stretch; color: #fff; position: relative; }
.tb { width: 46px; display: flex; align-items: center; justify-content: center; position: relative; flex: none; }
.tb.nar { width: 45px; }
.tb.nar2 { width: 45px; }
.tb.pin::after, .tb.active::after { content: ""; position: absolute; left: 5px; right: 5px; bottom: 0; height: 2px; background: #7cb6ea; }
.tb.active { background: #3d3d3d; width: 42px; margin-left: 0; }
.tb.active::after { left: 0; right: 0; }
.tray { margin-left: auto; display: flex; align-items: center; height: 100%; position: relative; width: 283px; font-family: "Open Sans", sans-serif; }
.tray svg { flex: none; }
.t-people { margin-left: 0; }
.t-chev { margin-left: 20px; }
.t-bat { margin-left: 9px; }
.t-wifi { margin-left: 10px; }
.t-vol { margin-left: 6px; }
.t-lang { margin-left: 10px; font-size: 12px; color: #eee; width: 30px; }
.t-clock { margin-left: 9px; width: 66px; text-align: center; font-size: 11.500px; line-height: 19px; color: #ddd; white-space: nowrap; }
.t-note { margin-left: 16px; }
```
